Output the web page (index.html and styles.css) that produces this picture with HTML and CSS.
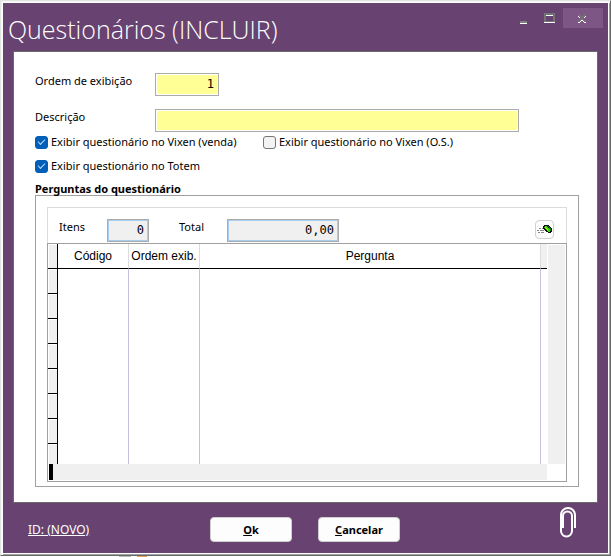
FILE: index.html
```html
<!DOCTYPE html>
<html lang="pt-BR">
<head>
<meta charset="utf-8">
<title>Questionários (INCLUIR)</title>
<link rel="stylesheet" href="styles.css">
</head>
<body>
<form class="window">
  <header class="titlebar">
    <h1 class="title">Questionários (INCLUIR)</h1>
    <div class="controls">
      <button type="button" class="ctl" aria-label="Minimizar"><svg width="7" height="3" shape-rendering="crispEdges"><path fill="#808080" d="M0 0h7v2H0z"/><path fill="#fff" d="M0 2h7v1H0z"/></svg></button>
      <button type="button" class="ctl" aria-label="Maximizar"><svg width="11" height="10" shape-rendering="crispEdges"><path fill="#737373" fill-rule="evenodd" d="M0 0h11v9H0zM2 3h7v5H2z"/><path fill="#fff" d="M2 2h7v1H2zM0 9h11v1H0z"/></svg></button>
      <button type="button" class="ctl ctl-close" aria-label="Fechar"><svg width="8" height="9" shape-rendering="crispEdges"><path fill="#737373" d="M0 0h2v1h1v1h2V1h1V0h2v1H7v1H6v1H5v2h1v1h1v1h1v1H6V7H5V6H3v1H2v1H0V7h1V6h1V5h1V3H2V2H1V1H0z"/><path fill="#fff" d="M0 2h1v1H0zM1 3h1v1H1zM7 2h1v1H7zM6 3h1v1H6zM3 6h2v1H3zM2 7h1v1H2zM5 7h1v1H5zM0 8h2v1H0zM6 8h2v1H6z"/></svg></button>
    </div>
  </header>

  <main class="panel">
    <div class="field">
      <label for="ordem">Ordem de exibição</label>
      <input class="text number" id="ordem" type="text" value="1">
    </div>
    <div class="field">
      <label for="descricao">Descrição</label>
      <input class="text wide" id="descricao" type="text">
    </div>
    <div class="checks">
      <label class="check"><input type="checkbox" checked>Exibir questionário no Vixen (venda)</label>
      <label class="check"><input type="checkbox">Exibir questionário no Vixen (O.S.)</label>
      <label class="check"><input type="checkbox" checked>Exibir questionário no Totem</label>
    </div>

    <h2 class="group-title">Perguntas do questionário</h2>
    <section class="group">
      <div class="summary">
        <label for="itens">Itens</label>
        <input class="text total small" id="itens" type="text" value="0" readonly>
        <label for="total">Total</label>
        <input class="text total" id="total" type="text" value="0,00" readonly>
        <button type="button" class="tool" aria-label="Limpar"><svg width="15" height="9" viewBox="0 0 15 9" shape-rendering="crispEdges"><path fill="#888" d="M2 3h2v1H2zM5 3h2v1H5zM0 5h2v1H0zM3 5h4v1H3zM1 7h2v1H1zM4 7h3v1H4z"/><path fill="#111" d="M7 0h5v1h1v1h1v1h1v4h-1v1h-3V7H9V6H8V5H7V4H6V1h1z"/><path fill="#3bd40b" d="M8 1h2v1h1v1h1v1h1v3h-2V6h-1V5H9V4H8V3H7V2h1z"/><path fill="#b8f024" d="M8 2h1v1h1v1h1v1h-1V4H9V3H8z"/><path fill="#087d12" d="M11 1h1v1h1v1h1v3h-1V4h-1V2h-1z"/></svg></button>
      </div>
      <div class="grid">
        <table class="rows">
          <colgroup><col class="c-mark"><col class="c-code"><col class="c-code"><col><col class="c-end"></colgroup>
          <thead><tr><th></th><th>Código</th><th>Ordem exib.</th><th>Pergunta</th><th></th></tr></thead>
          <tbody>
            <tr><td></td><td></td><td></td><td></td><td></td></tr>
            <tr><td></td><td></td><td></td><td></td><td></td></tr>
            <tr><td></td><td></td><td></td><td></td><td></td></tr>
            <tr><td></td><td></td><td></td><td></td><td></td></tr>
            <tr><td></td><td></td><td></td><td></td><td></td></tr>
            <tr><td></td><td></td><td></td><td></td><td></td></tr>
            <tr><td></td><td></td><td></td><td></td><td></td></tr>
            <tr class="last"><td></td><td></td><td></td><td></td><td></td></tr>
          </tbody>
        </table>
        <div class="vbar"></div>
        <div class="hbar"></div>
      </div>
    </section>
  </main>

  <footer class="footer">
    <a class="record" href="#">ID: (NOVO)</a>
    <button type="button" class="btn"><u>O</u>k</button>
    <button type="button" class="btn"><u>C</u>ancelar</button>
    <button type="button" class="clip" aria-label="Anexos"><svg width="18" height="33" viewBox="0 0 18 33" fill="none" stroke="#fff" stroke-width="2"><path d="M4 22V10a4.500 4.500 0 0 1 9 0v15a5.500 5.500 0 0 1-11 0V9a7 7 0 0 1 14 0v13"/></svg></button>
  </footer>
</form>
<div class="behind"></div>
</body>
</html>
```
FILE: styles.css
```css
* { box-sizing: border-box; }
body {
  margin: 0;
  background: #fff;
  color: #000;
  font: 11px/16px "Noto Sans", "Open Sans", sans-serif;
}
button, input { font: inherit; margin: 0; padding: 0; }
button { border: 0; background: none; display: flex; align-items: center; justify-content: center; }

.window {
  background: #684270;
  border: 1px solid;
  border-color: #e3e3e3 #696969 #696969 #e3e3e3;
  box-shadow: inset 1px 1px #f4f4f4, inset 2px 2px #fff, inset -1px -1px #a0a0a0, inset -2px -2px #fff;
  padding: 2px;
}
.titlebar { display: flex; justify-content: space-between; height: 48px; padding: 5px 5px 0; }
.title { margin: 0; color: #fff; font: 300 25px/42px "Open Sans", sans-serif; }
.controls { display: flex; }
.ctl { width: 26px; height: 20px; padding-right: 2px; }
.ctl-close { width: 40px; background: #7d5686; }
.ctl:first-child { align-items: flex-end; padding-bottom: 4px; }

.panel {
  margin: 0 10px;
  padding: 21px 18px 15px 21px;
  border: 1px solid #696969;
  background: #fff;
}
.field { display: flex; margin-bottom: 13px; }
.field label { width: 120px; }
.text {
  height: 23px;
  border: 1px solid #ababab;
  background: #ffff96;
  box-shadow: inset 0 0 0 1px #fff;
  border-radius: 0;
  font-family: "DejaVu Sans Mono", monospace;
  font-size: 12px;
}
.number { width: 64px; padding: 0 4px 2px; text-align: right; }
.wide { width: 364px; }
.checks { display: grid; grid-template-columns: 228px auto; row-gap: 8px; margin-top: -11px; }
.check { display: flex; align-items: center; gap: 3px; white-space: nowrap; }
.check input {
  appearance: none;
  width: 13px;
  height: 13px;
  border: 1px solid #767676;
  border-radius: 3px;
  background: #f3f3f3;
}
.check input:checked {
  border-color: #005fb8;
  background: #005fb8;
  display: flex;
  align-items: center;
  justify-content: center;
}
.check input:checked::before {
  content: "";
  width: 6px;
  height: 3px;
  border: solid #b9daf5;
  border-width: 0 0 1px 1px;
  transform: translateY(-1px) rotate(-45deg);
}

.group-title { margin: 7px 0 0; height: 14px; font-size: 11px; line-height: 16px; }
.group { border: 1px solid #a0a0a0; padding: 11px 11px 4px; }
.summary {
  display: flex;
  height: 36px;
  padding: 11px 12px 0 11px;
  border: 1px solid #dcdcdc;
  border-bottom: 0;
}
.summary label { width: 48px; }
.total {
  width: 112px;
  padding: 0 4px 2px;
  background: #f0f0f0;
  box-shadow: inset 0 0 0 1px #a8cdf0;
  text-align: right;
}
.small { width: 42px; margin-right: 30px; }
.tool {
  width: 19px;
  height: 19px;
  margin: 1px 0 0 auto;
  border: 1px solid #d0d0d0;
  border-radius: 4px;
  background: #fdfdfd;
}
.grid {
  display: grid;
  grid-template-columns: 1fr 17px;
  column-gap: 1px;
  border: 1px solid #a0a0a0;
  padding: 0 1px 1px 0;
}
.rows { width: 100%; table-layout: fixed; border-collapse: separate; border-spacing: 0; }
.rows th {
  height: 25px;
  padding: 0;
  border-right: 1px solid #dcdcdc;
  border-bottom: 1px solid #000;
  font: 12px/16px "Liberation Sans", sans-serif;
}
.rows td { height: 25px; padding: 0; border-right: 1px solid #c8c0e0; }
.rows .last td { height: 20px; }
.rows tr > :first-child {
  background: #f0f0f0;
  border-right: 1px solid #000;
  border-bottom: 1px solid #000;
  box-shadow: inset 1px 1px #fff;
}
.rows .last > :first-child { border-bottom: 0; }
.rows tr > :last-child { border-right: 0; }
.rows th:last-child { background: #f0f0f0; }
.c-mark { width: 10px; }
.c-code { width: 71px; }
.c-end { width: 6px; }
.vbar { margin-top: 1px; background: #f0f0f0; }
.hbar { height: 16px; margin-left: 1px; background: #f0f0f0; border-left: 4px solid #000; }

.footer { display: flex; align-items: center; height: 50px; padding: 3px 31px 0 25px; }
.record { width: 182px; color: #fff; font-size: 12px; }
.btn {
  width: 82px;
  height: 25px;
  margin-right: 26px;
  border: 1px solid #d0d0d0;
  border-radius: 4px;
  background: #fdfdfd;
  color: #000;
  font-weight: 700;
}
.clip { margin: -14px 0 0 auto; }
.behind {
  height: 1px;
  background: linear-gradient(90deg, #fff 119px, #bbb 119px 131px, #fff 131px 137px, #f0a050 137px 147px, #fff 147px);
}
```
